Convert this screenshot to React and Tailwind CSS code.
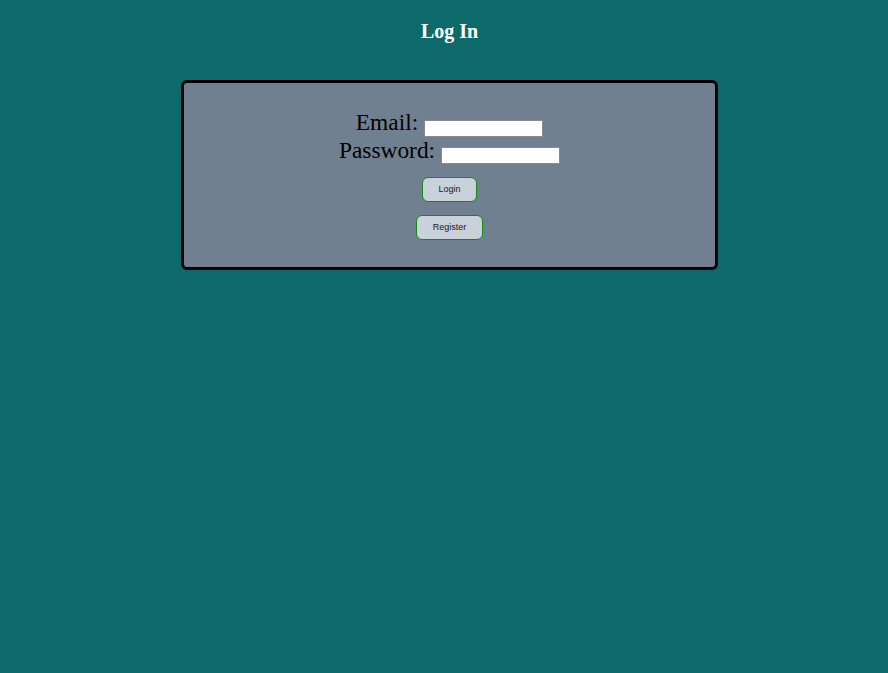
import React from 'react';

const serif = { fontFamily: '"Liberation Serif", "Times New Roman", serif' };
const sans = { fontFamily: '"Liberation Sans", Arial, sans-serif' };

const App = () => {
  const btnCls = "h-[25px] rounded-[6px] border border-[#138a13] bg-[#c9d1db] text-[9px] text-[#1a1a1a] flex items-center justify-center";

  return (
    <div className="min-h-[673px] w-full bg-[#0c6b6a]" style={serif}>
      <div className="ml-[181px] w-[537px] pt-[20px]">
        <h2 className="text-center text-[20px] leading-[23px] font-bold text-white">Log In</h2>

        <div className="mt-[37px] h-[190px] rounded-[6px] border-[3px] border-black bg-[#708090] pt-[26px] flex flex-col items-center">
          <div className="flex items-end gap-[6px] text-[23.4px] leading-[27.6px] text-black">
            <span>Email:</span>
            <input type="text" className="w-[119px] h-[17px] bg-white border border-[#8a8a8a] outline-none" />
          </div>
          <div className="flex items-end gap-[6px] text-[23.4px] leading-[27.6px] text-black">
            <span>Password:</span>
            <input type="password" className="w-[119px] h-[17px] bg-white border border-[#8a8a8a] outline-none" />
          </div>

          <button className={`${btnCls} mt-[13px] w-[55px]`} style={sans}>
            Login
          </button>
          <button className={`${btnCls} mt-[13px] w-[67px]`} style={sans}>
            Register
          </button>
        </div>
      </div>
    </div>
  );
};

export default App;
